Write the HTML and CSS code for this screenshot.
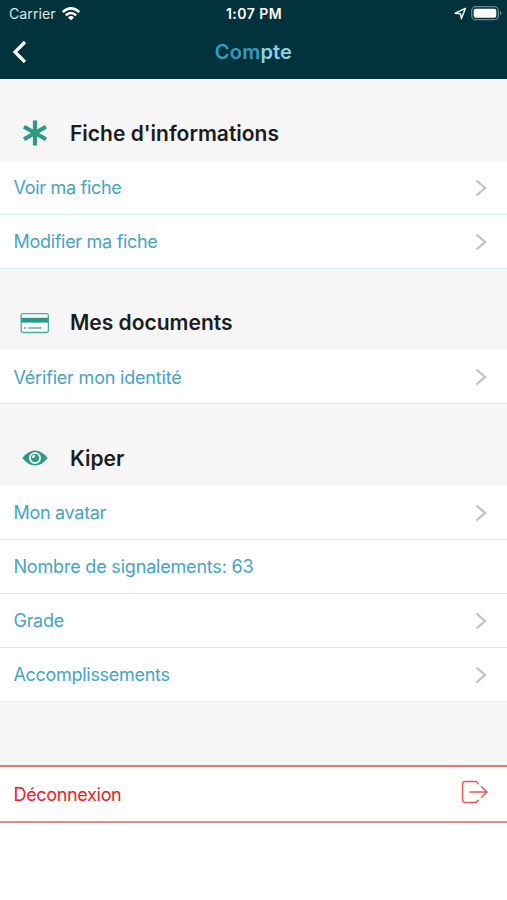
FILE: index.html
```html
<!DOCTYPE html>
<html lang="fr">
<head>
<meta charset="utf-8">
<title>Compte</title>
<link rel="stylesheet" href="styles.css">
</head>
<body>
<header class="top">
  <div class="status">
    <div class="carrier"><span>Carrier</span>
      <svg width="20" height="16" viewBox="0 0 20 16" fill="none" stroke="#fff" stroke-width="2.5"><path d="M1.7 6.2Q10 -1.4 18.3 6.2M4.8 9.3Q10 4.7 15.2 9.3"/><path d="M10 14.3L7 11.4Q10 8.8 13 11.4Z" fill="#fff" stroke="none"/></svg>
    </div>
    <div class="clock">1:07 PM</div>
    <div class="power">
      <svg width="13" height="13" viewBox="0 0 13 13" fill="none" stroke="#eef5f6" stroke-width="1.5" stroke-linejoin="round"><path d="M1.2 6.3L11.4 1.4L7.4 11.6L6.5 6.7Z"/></svg>
      <svg width="31" height="15" viewBox="0 0 31 15"><rect x=".7" y=".7" width="26.6" height="13" rx="4" fill="none" stroke="#6c878c" stroke-width="1.3"/><rect x="2.7" y="2.7" width="22.6" height="9" rx="2" fill="#fff"/><path d="M28.8 4.8Q32 7.2 28.8 9.6Z" fill="#6c878c"/></svg>
    </div>
  </div>
  <nav class="nav">
    <svg class="back" width="16" height="24" viewBox="0 0 16 24" fill="none" stroke="#fff" stroke-width="3.2"><path d="M13 2L3 12L13 22"/></svg>
    <h1><span>Com</span><span class="light">pte</span></h1>
  </nav>
</header>
<main>
  <section>
    <h2><svg width="30" height="30" viewBox="0 0 30 30" stroke="#2d9886" stroke-width="4.2"><path d="M15 2.5V27.5M4 8.7L26 21.3M4 21.3L26 8.7"/></svg><span>Fiche d'informations</span></h2>
    <a class="row"><span>Voir ma fiche</span><svg class="chev" viewBox="0 0 12 18"><path d="M1.5 1.5L10 9L1.5 16.5"/></svg></a>
    <a class="row"><span>Modifier ma fiche</span><svg class="chev" viewBox="0 0 12 18"><path d="M1.5 1.5L10 9L1.5 16.5"/></svg></a>
  </section>
  <section>
    <h2><svg width="30" height="30" viewBox="0 0 30 30"><rect x="1.2" y="5.7" width="27.2" height="18.8" rx="2" fill="#f4faf8" stroke="#55ab9c" stroke-width="1.3"/><path d="M1.2 9.8H28.4V14.6H1.2Z" fill="#2d9886"/><path d="M4 19.9H6M8.5 19.9H21.5" stroke="#65b3a6" stroke-width="1.5"/></svg><span>Mes documents</span></h2>
    <a class="row"><span class="wide">Vérifier mon identité</span><svg class="chev" viewBox="0 0 12 18"><path d="M1.5 1.5L10 9L1.5 16.5"/></svg></a>
  </section>
  <section>
    <h2><svg width="30" height="30" viewBox="0 0 30 30"><path d="M2.3 15Q8.3 7.5 15 7.5T27.7 15Q21.7 22.5 15 22.5T2.3 15Z" fill="#2d9886"/><circle cx="15" cy="15" r="5.1" fill="#2d9886" stroke="#f7f7f7" stroke-width="1.8"/><path d="M15.2 11.8Q15.5 15.2 11.8 15A3.5 3.5 0 0 1 15.2 11.8Z" fill="#f7f7f7"/></svg><span>Kiper</span></h2>
    <a class="row"><span>Mon avatar</span><svg class="chev" viewBox="0 0 12 18"><path d="M1.5 1.5L10 9L1.5 16.5"/></svg></a>
    <a class="row"><span class="wide">Nombre de signalements: 63</span></a>
    <a class="row"><span>Grade</span><svg class="chev" viewBox="0 0 12 18"><path d="M1.5 1.5L10 9L1.5 16.5"/></svg></a>
    <a class="row"><span>Accomplissements</span><svg class="chev" viewBox="0 0 12 18"><path d="M1.5 1.5L10 9L1.5 16.5"/></svg></a>
  </section>
</main>
<a class="logout"><span>Déconnexion</span>
  <svg width="28" height="24" viewBox="0 0 28 24" fill="none" stroke="#ed5555" stroke-width="1.4"><path d="M17.5 4.2L15.3 1.5H4.5Q1.5 1.5 1.5 4.5V19.5Q1.5 22.5 4.5 22.5H15.3L17.5 19.8M8.5 12H26M20 6.2L26 12L20 17.8"/></svg>
</a>
</body>
</html>
```
FILE: styles.css
```css
* { box-sizing: border-box; }
body { margin: 0; background: #fff; font-family: Inter, sans-serif; }
svg { display: block; flex: none; }
.top { height: 79px; background: #02323c; color: #fff; }
.status { height: 27px; padding: 0 8px 0 9px; display: grid; grid-template-columns: 1fr auto 1fr; align-items: center; }
.carrier { display: flex; align-items: center; gap: 5px; font-size: 14.2px; color: #dce5e7; }
.clock { font-size: 14px; letter-spacing: 0.45px; font-weight: 600; }
.power { display: flex; justify-content: flex-end; align-items: center; gap: 4px; margin-right: -3px; }
.nav { height: 50px; display: grid; grid-template-columns: 1fr auto 1fr; align-items: center; padding: 0 12px; }
h1 { margin: 0; font-size: 20px; letter-spacing: 0.2px; line-height: 24px; font-weight: 600; color: #359bc3; }
.light { color: #8bd3e3; }
main { background: #f6f6f7; height: 686px; }
h2 { margin: 0; height: 81.5px; padding: 27px 20px 0; display: flex; align-items: center; gap: 20px; font-size: 21px; font-weight: 600; color: #1c1c1e; }
.row { height: 54px; padding: 1px 20px 0 13.5px; display: flex; align-items: center; justify-content: space-between; background: #fff; border-bottom: 1px solid #d5eff5; color: #46a3c6; font-size: 18px; letter-spacing: -0.3px; }
.row .wide { letter-spacing: -0.19px; }
.chev { width: 12px; height: 18px; fill: none; stroke: #c3c3c5; stroke-width: 2.3; }
.logout { height: 58px; padding: 0 18px 0 13.5px; display: flex; align-items: center; justify-content: space-between; border-top: 2px solid #e87570; border-bottom: 2px solid #e58a86; color: #ed2028; font-size: 18px; letter-spacing: -0.33px; }
.logout svg { margin-bottom: 5px; }
```
